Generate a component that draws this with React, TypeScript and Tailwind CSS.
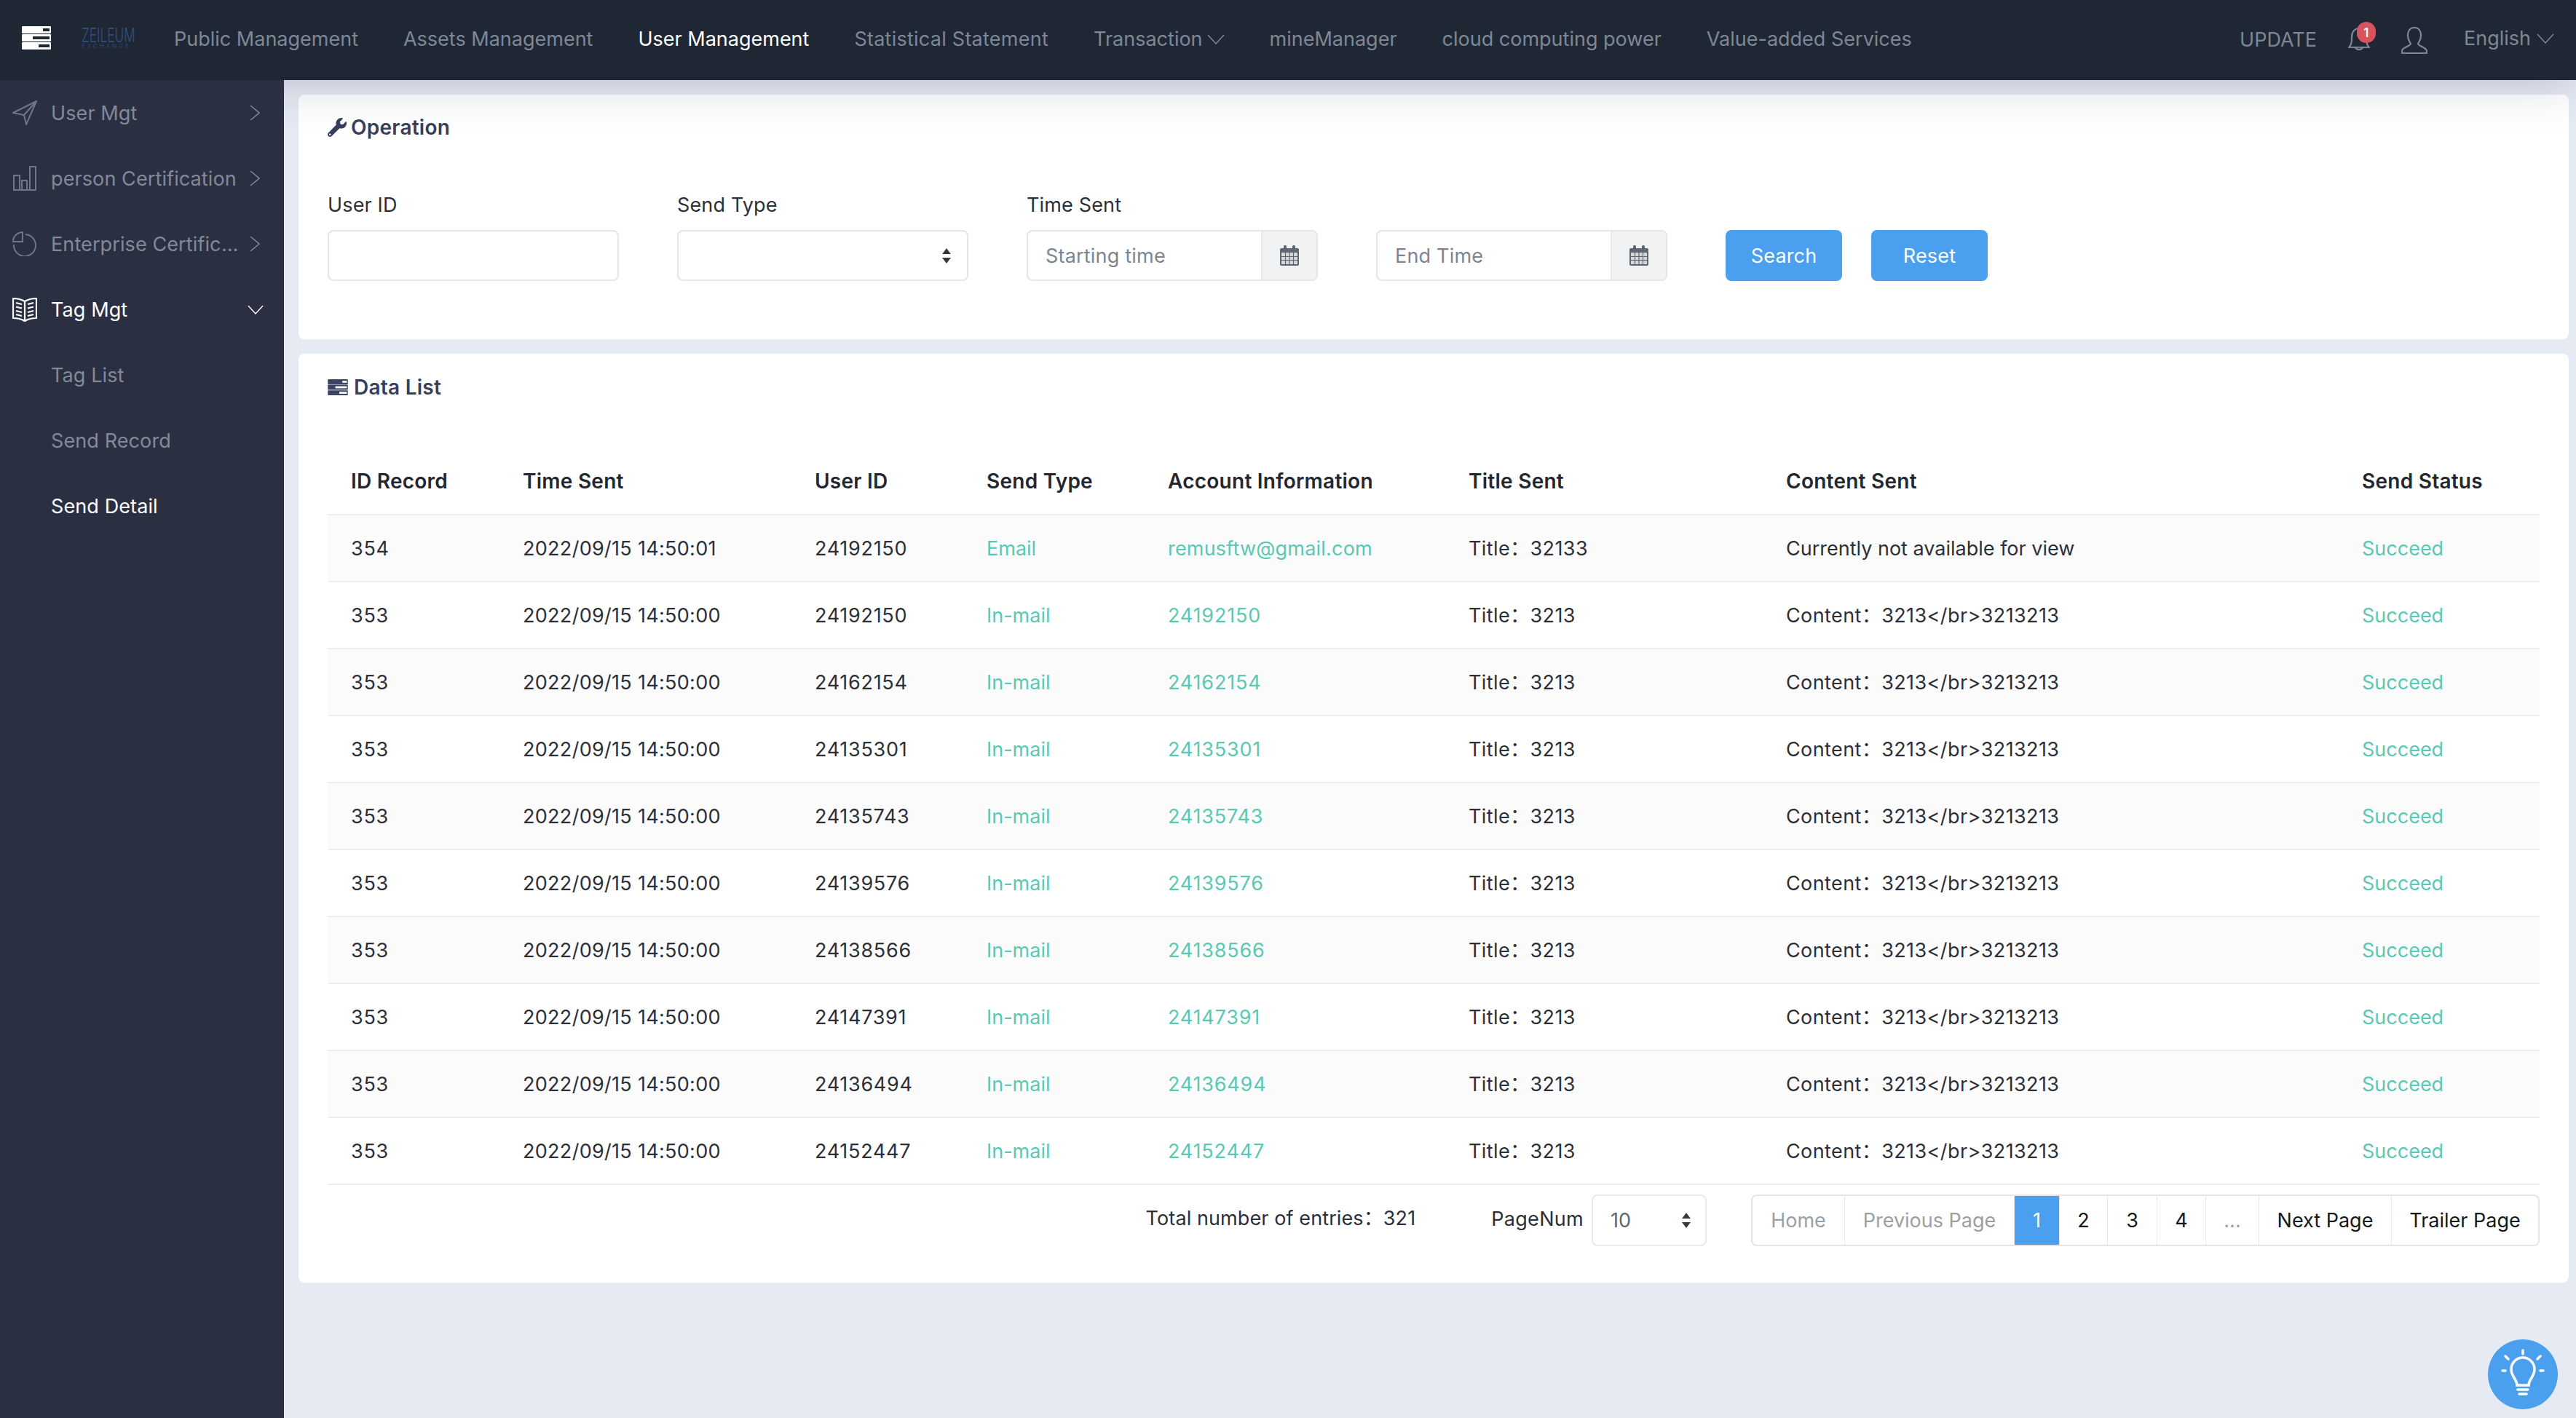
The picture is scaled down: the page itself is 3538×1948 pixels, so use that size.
import React from "react";
import { FaWrench } from "react-icons/fa";

const Chevron = ({ dir = "right", className = "" }: { dir?: "right" | "down"; className?: string }) =>
  dir === "right" ? (
    <svg viewBox="0 0 14 22" className={className} fill="none" stroke="currentColor" strokeWidth="1.5">
      <polyline points="1,1 13,11 1,21" />
    </svg>
  ) : (
    <svg viewBox="0 0 24 14" className={className} fill="none" stroke="currentColor" strokeWidth="1.5">
      <polyline points="1,1 12,13 23,1" />
    </svg>
  );

const Stack = ({ fg, notch, className }: { fg: string; notch: string; className: string }) => (
  <svg viewBox="0 0 40 32" className={className}>
    <rect x="0" y="0" width="40" height="10" rx="1" fill={fg} />
    <rect x="0" y="11" width="40" height="10" rx="1" fill={fg} />
    <rect x="0" y="22" width="40" height="10" rx="1" fill={fg} />
    <rect x="29" y="3" width="9" height="4" fill={notch} />
    <rect x="15" y="14" width="23" height="4" fill={notch} />
    <rect x="23" y="25" width="15" height="4" fill={notch} />
  </svg>
);

const SendIcon = () => (
  <svg viewBox="0 0 34 34" className="w-[34px] h-[34px]" fill="none" stroke="currentColor" strokeWidth="2">
    <path d="M33 1 L1 17 L16 20 L19 33 Z M33 1 L16 20" strokeLinejoin="round" />
  </svg>
);
const BarsIcon = () => (
  <svg viewBox="0 0 34 34" className="w-[34px] h-[34px]" fill="none" stroke="currentColor" strokeWidth="2">
    <rect x="2" y="13" width="8" height="20" />
    <rect x="13" y="20" width="7" height="13" />
    <rect x="24" y="1" width="8" height="32" />
    <line x1="1" y1="33" x2="33" y2="33" />
  </svg>
);
const PieIcon = () => (
  <svg viewBox="0 0 34 34" className="w-[34px] h-[34px]" fill="none" stroke="currentColor" strokeWidth="2">
    <path d="M14 1 A13 13 0 0 0 1 14 L14 14 Z" />
    <path d="M18 4 A15 15 0 1 1 2 18" />
  </svg>
);
const BookIcon = () => (
  <svg viewBox="0 0 34 34" className="w-[34px] h-[34px]" fill="none" stroke="currentColor" strokeWidth="2.2" strokeLinejoin="round">
    <path d="M17 6 C12 3 6 2 1 2 V29 C6 29 12 30 17 33 C22 30 28 29 33 29 V2 C28 2 22 3 17 6 Z M17 6 V33" />
    <path d="M5 8 L13 10 M5 13.5 L13 15.5 M5 19 L13 21 M5 24 L13 26 M29 8 L21 10 M29 13.5 L21 15.5 M29 19 L21 21 M29 24 L21 26" />
  </svg>
);
const CalendarIcon = () => (
  <svg viewBox="0 0 26 28" className="w-[26px] h-[28px]" fill="#5e6670">
    <rect x="0" y="4" width="26" height="24" rx="2" />
    <rect x="5" y="0" width="4" height="7" rx="1.5" />
    <rect x="17" y="0" width="4" height="7" rx="1.5" />
    <rect x="2" y="10" width="22" height="16" fill="#d4d7da" />
    <path d="M2 15.5 H24 M2 20.5 H24 M7.5 10 V26 M13 10 V26 M18.5 10 V26" stroke="#5e6670" strokeWidth="1.2" />
  </svg>
);
const SelectArrows = ({ color = "#343a40" }: { color?: string }) => (
  <svg viewBox="0 0 16 21" className="w-[16px] h-[21px]" fill={color}>
    <path d="M8 0 L14 8 H2 Z M8 21 L14 13 H2 Z" />
  </svg>
);

const navItems = [
  "Public Management",
  "Assets Management",
  "User Management",
  "Statistical Statement",
  "Transaction",
  "mineManager",
  "cloud computing power",
  "Value-added Services",
];

const sideItems = [
  { label: "User Mgt", Icon: SendIcon },
  { label: "person Certification", Icon: BarsIcon },
  { label: "Enterprise Certification", Icon: PieIcon },
];

const rows = [
  ["353", "24192150"],
  ["353", "24162154"],
  ["353", "24135301"],
  ["353", "24135743"],
  ["353", "24139576"],
  ["353", "24138566"],
  ["353", "24147391"],
  ["353", "24136494"],
  ["353", "24152447"],
];

const headers = ["ID Record", "Time Sent", "User ID", "Send Type", "Account Information", "Title Sent", "Content Sent", "Send Status"];

const cellClass = (i: number, c: string) => {
  if (i === 1) return "tracking-[0.3px] text-[#2b2f38]";
  if (i === 0 || i === 2) return "tracking-[0.7px] text-[#2b2f38]";
  if (i === 4) return `${c.includes("@") ? "tracking-[0.2px]" : "tracking-[0.8px]"} text-[#5bc8b3]`;
  if (i === 3 || i === 7) return "text-[#5bc8b3]";
  return `${c.includes("：") ? "tracking-[0.4px]" : ""} text-[#2b2f38]`;
};

const Row = ({ cells, odd }: { cells: string[]; odd: boolean }) => (
  <tr className={`h-[92px] border-b-2 border-[#eeeeef] ${odd ? "bg-[#fbfbfc]" : "bg-white"}`}>
    {cells.map((c, i) => (
      <td key={i} className={`px-8 pt-[2px] ${cellClass(i, c)}`}>
        {c}
      </td>
    ))}
  </tr>
);

const DateField = ({ placeholder }: { placeholder: string }) => (
  <div className="w-[400px] h-[70px] flex border-2 border-[#e4e5ea] rounded-lg bg-white overflow-hidden">
    <div className="flex-1 flex items-center pl-6 pt-[2px] tracking-[0.2px] text-[#7b8591]">{placeholder}</div>
    <div className="w-[76px] flex items-center justify-center bg-[#f1f2f4] border-l-2 border-[#e8e9ec]">
      <CalendarIcon />
    </div>
  </div>
);

export default function App() {
  return (
    <div className="h-screen w-full flex flex-col overflow-hidden bg-[#e6eaf3] font-['Inter','Noto_Sans_CJK_SC',sans-serif] text-[27px] leading-[30px] text-[#2b2f38]">
      <header className="relative z-10 h-[110px] shrink-0 flex items-center bg-[#1f2735] text-[#7d8796] shadow-[0_0_70px_rgba(40,48,90,0.26)]">
        <Stack fg="#ffffff" notch="#1f2735" className="ml-[30px] w-[40px] h-[32px] -mt-[6px]" />
        <div className="ml-[42px] w-[76px] -mt-[6px] flex flex-col text-[#2f507c] font-light">
          <span className="text-[27px] leading-[22px] scale-x-[0.64] origin-left whitespace-nowrap">ZEILEUM</span>
          <span className="text-[8px] leading-[7px] tracking-[3px] whitespace-nowrap">EXCHANGE</span>
        </div>
        <nav className="ml-[51px] -mt-[3px] flex items-center gap-[62px]">
          {navItems.map((n) => (
            <span
              key={n}
              className={`flex items-center gap-[6px] ${n === "User Management" ? "text-white" : ""} ${n === "Statistical Statement" ? "tracking-[0.25px]" : ""}`}
            >
              {n}
              {n === "Transaction" && <Chevron dir="down" className="w-[24px] h-[14px]" />}
            </span>
          ))}
        </nav>
        <div className="ml-auto pr-[30px] flex items-center">
          <span>UPDATE</span>
          <span className="relative ml-[42px] w-[32px] h-[36px]">
            <svg viewBox="0 0 32 36" className="w-[32px] h-[36px]" fill="none" stroke="currentColor" strokeWidth="2.2" strokeLinejoin="round">
              <path d="M2 28 C6 24 6 20 6 14 C6 7 10 2 16 2 C22 2 26 7 26 14 C26 20 26 24 30 28 Z" />
              <path d="M11 28 A5.5 5.5 0 0 0 21 28" />
            </svg>
            <span className="absolute -top-[7px] left-[13px] w-[26px] h-[29px] rounded-full bg-[#d9535f] text-white text-[17px] font-semibold flex items-center justify-center">1</span>
          </span>
          <svg viewBox="0 0 36 37" className="ml-[42px] w-[36px] h-[37px]" fill="none" stroke="currentColor" strokeWidth="2.2" strokeLinejoin="round">
            <path d="M18 1 C11 1 9 7 9 12 C9 18 12 21 13 23 C13 26 1 28 1 33 V36 H35 V33 C35 28 23 26 23 23 C24 21 27 18 27 12 C27 7 25 1 18 1 Z" />
          </svg>
          <span className="ml-[50px] -mt-[5px]">English</span>
          <Chevron dir="down" className="ml-[8px] -mt-[4px] w-[24px] h-[14px]" />
        </div>
      </header>

      <div className="flex-1 flex min-h-0">
        <aside className="relative z-20 w-[390px] shrink-0 bg-[#2a3042] text-[#838999] tracking-[0.1px]">
          {sideItems.map(({ label, Icon }) => (
            <div key={label} className="h-[90px] flex items-center pl-[17px] pr-[33px]">
              <span className="text-[#6f7785] w-[34px] h-[34px] flex"><Icon /></span>
              <span className="ml-[19px] w-[258px] pt-[1px] truncate">{label}</span>
              <Chevron className="ml-auto w-[14px] h-[22px] text-[#838999]" />
            </div>
          ))}
          <div className="h-[90px] flex items-center pl-[17px] pr-[28px] text-white">
            <span className="w-[34px] h-[34px] flex"><BookIcon /></span>
            <span className="ml-[19px] pt-[1px]">Tag Mgt</span>
            <Chevron dir="down" className="ml-auto w-[22px] h-[13px]" />
          </div>
          <div className="h-[90px] flex items-center pl-[70px] pt-[1px]">Tag List</div>
          <div className="h-[90px] flex items-center pl-[70px] pt-[1px]">Send Record</div>
          <div className="h-[90px] flex items-center pl-[70px] pt-[1px] text-white">Send Detail</div>
        </aside>

        <main className="flex-1 min-w-0 pl-[20px] pr-[10px] pt-[20px] flex flex-col gap-[20px]">
          <section className="bg-white rounded-lg px-[40px] pt-[30px] pb-[80px]">
            <h2 className="flex items-center text-[28px] font-semibold tracking-[0.25px] text-[#383f5c]">
              <FaWrench className="w-[26px] h-[26px] mr-[6px]" />
              Operation
            </h2>
            <div className="mt-[76px] flex items-end gap-[80px] tracking-[0.15px]">
              <div>
                <label className="block pt-[1px] mb-[19px]">User ID</label>
                <div className="w-[400px] h-[70px] border-2 border-[#e4e5ea] rounded-lg bg-white" />
              </div>
              <div>
                <label className="block pt-[1px] mb-[19px]">Send Type</label>
                <div className="w-[400px] h-[70px] border-2 border-[#e4e5ea] rounded-lg bg-white flex items-center justify-end pr-[20px]">
                  <SelectArrows />
                </div>
              </div>
              <div>
                <label className="block pt-[1px] mb-[19px]">Time Sent</label>
                <DateField placeholder="Starting time" />
              </div>
              <DateField placeholder="End Time" />
              <div className="flex gap-[40px]">
                <button className="w-[160px] h-[70px] pt-[1px] bg-[#4a9fee] text-white rounded-lg">Search</button>
                <button className="w-[160px] h-[70px] pt-[1px] bg-[#4a9fee] text-white rounded-lg">Reset</button>
              </div>
            </div>
          </section>

          <section className="bg-white rounded-lg px-[40px] pt-[31px] pb-[50px]">
            <h2 className="flex items-center text-[28px] font-semibold tracking-[0.25px] text-[#383f5c]">
              <Stack fg="#3b4463" notch="#ffffff" className="w-[28px] h-[22px] mr-[8px]" />
              Data List
            </h2>
            <table className="mt-[68px] w-full table-fixed border-collapse text-left">
              <colgroup>
                <col className="w-[236px]" />
                <col className="w-[401px]" />
                <col className="w-[236px]" />
                <col className="w-[249px]" />
                <col className="w-[413px]" />
                <col className="w-[436px]" />
                <col className="w-[791px]" />
                <col />
              </colgroup>
              <thead>
                <tr className="h-[92px] border-b-2 border-[#eeeeef]">
                  {headers.map((h) => (
                    <th key={h} className="px-8 text-[28px] font-semibold tracking-[0.25px] text-[#23272f]">{h}</th>
                  ))}
                </tr>
              </thead>
              <tbody>
                <Row odd cells={["354", "2022/09/15 14:50:01", "24192150", "Email", "remusftw@gmail.com", "Title：32133", "Currently not available for view", "Succeed"]} />
                {rows.map(([id, u], i) => (
                  <Row
                    key={u}
                    odd={i % 2 === 1}
                    cells={[id, "2022/09/15 14:50:00", u, "In-mail", u, "Title：3213", "Content：3213</br>3213213", "Succeed"]}
                  />
                ))}
              </tbody>
            </table>
            <div className="mt-[13px] flex justify-end items-center h-[71px]">
              <span className="-mt-[6px] tracking-[0.1px]">Total number of entries：321</span>
              <span className="ml-[104px] -mt-[4px] tracking-[0.3px]">PageNum</span>
              <div className="ml-[11px] w-[158px] h-[71px] border-2 border-[#e8e9ec] rounded-lg flex items-center justify-between pl-[24px] pr-[18px] text-[#5e6670]">
                10
                <SelectArrows />
              </div>
              <div className="ml-[61px] h-[71px] flex border-2 border-[#e4e5ea] rounded-lg overflow-hidden">
                {[
                  ["Home", "w-[126px] text-[#9a9fa6]"],
                  ["Previous Page", "w-[233px] text-[#9a9fa6]"],
                  ["1", "w-[62px] bg-[#4a9fee] text-white"],
                  ["2", "w-[66px] text-[#15181d]"],
                  ["3", "w-[68px] text-[#15181d]"],
                  ["4", "w-[67px] text-[#15181d]"],
                  ["...", "w-[73px] text-[#9a9fa6]"],
                  ["Next Page", "w-[182px] text-[#15181d]"],
                  ["Trailer Page", "w-[202px] text-[#15181d]"],
                ].map(([t, c], i) => (
                  <span key={t} className={`flex items-center justify-center ${i ? "border-l border-[#e6e7ea]" : ""} ${c}`}>{t}</span>
                ))}
              </div>
            </div>
          </section>
        </main>
      </div>

      <div className="fixed right-[25px] bottom-[12px] z-30 w-[96px] h-[96px] rounded-full bg-[#4a9fee] flex items-center justify-center">
        <svg viewBox="0 0 60 70" className="w-[60px] h-[70px]" fill="none" stroke="white" strokeWidth="3.5" strokeLinecap="round">
          <path d="M22 50 C22 42 14 38 14 28 A16 16 0 0 1 46 28 C46 38 38 42 38 50 Z" />
          <path d="M23 56 H37 M25 62 H35 M30 2 V7 M6 10 L10 14 M54 10 L50 14 M2 30 H6 M54 30 H58" />
        </svg>
      </div>
    </div>
  );
}
